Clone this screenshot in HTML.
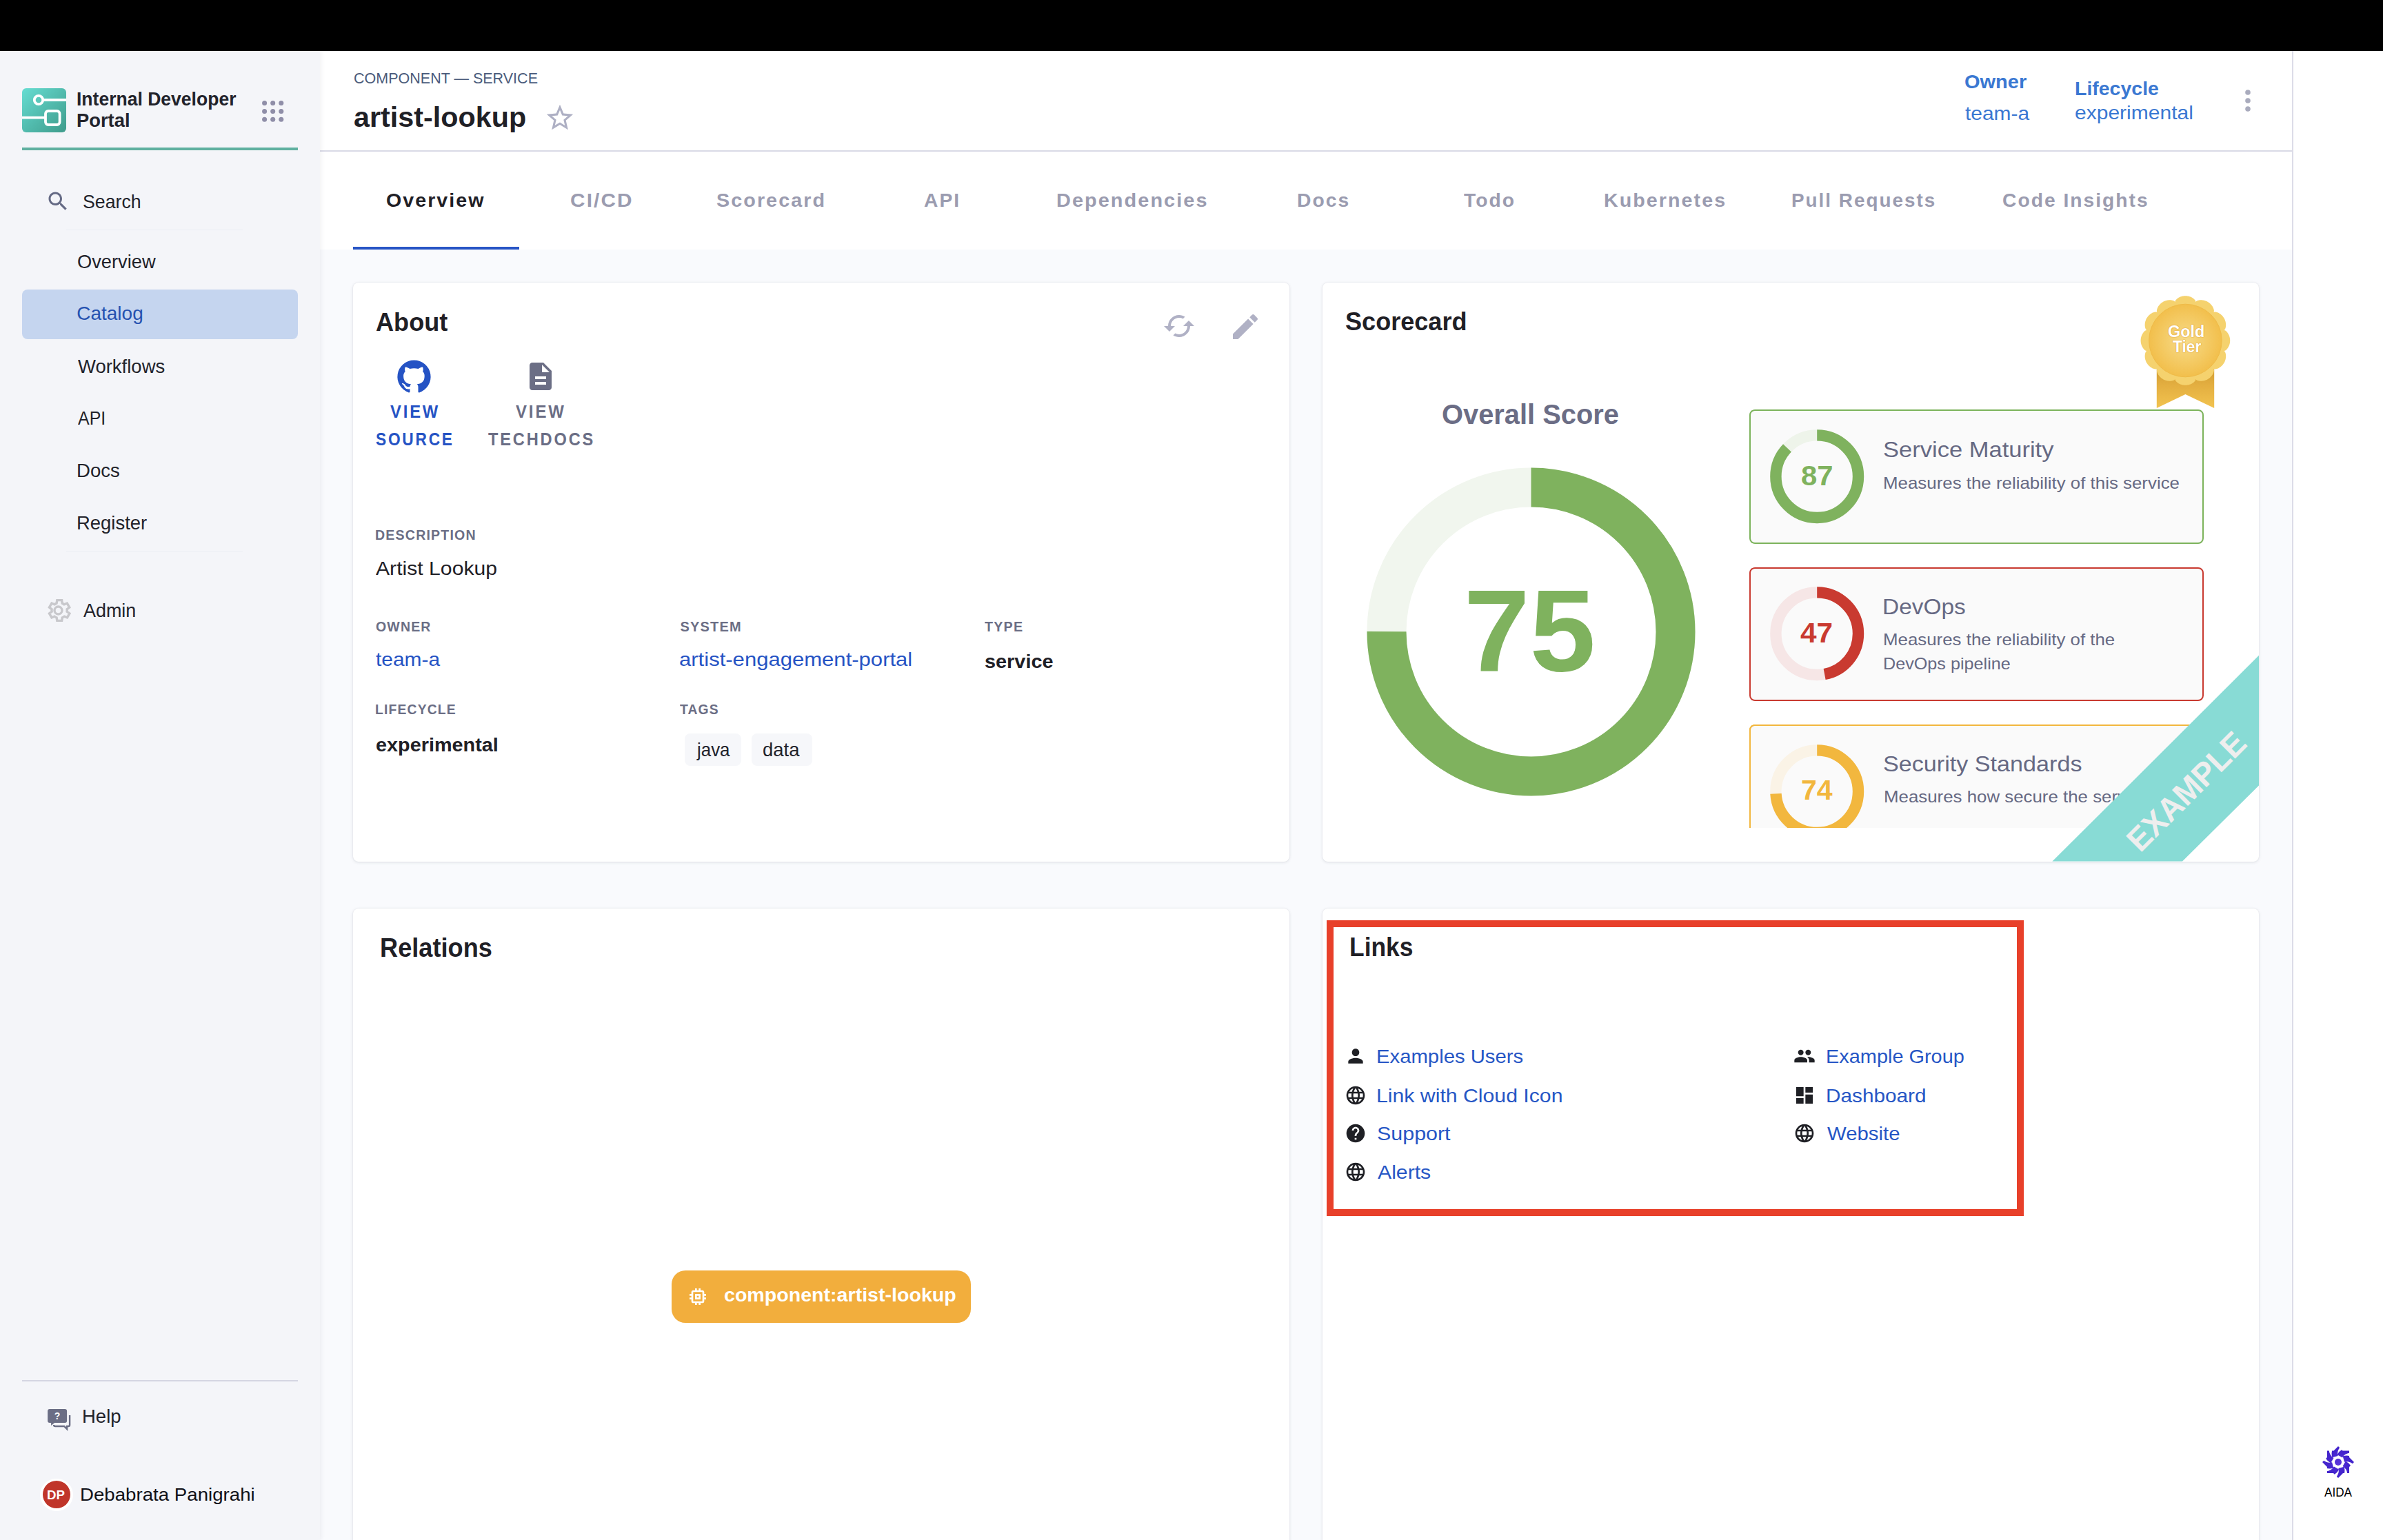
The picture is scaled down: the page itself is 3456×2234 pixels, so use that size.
<!DOCTYPE html>
<html><head><meta charset="utf-8"><title>artist-lookup</title>
<style>
html,body{margin:0;padding:0;width:3456px;height:2234px;overflow:hidden;background:#f9fafd}
#root{position:absolute;left:0;top:0;width:1728px;height:1117px;zoom:2;overflow:hidden;font-family:"Liberation Sans", sans-serif;background:#f9fafd}
.t{position:absolute;white-space:nowrap;transform-origin:0 50%;font-family:"Liberation Sans", sans-serif}
svg{display:block}
</style></head><body><div id="root">
<div style="position:absolute;left:0.00px;top:0.00px;width:1728.00px;height:37.00px;background:#000"></div>
<div style="position:absolute;left:232.00px;top:37.00px;width:1430.00px;height:1080.00px;background:#f9fafd"></div>
<div style="position:absolute;left:1662.00px;top:37.00px;width:66.00px;height:1080.00px;background:#fff;border-left:1px solid #dcdce8;box-sizing:border-box"></div>
<div style="position:absolute;left:232.00px;top:37.00px;width:1430.00px;height:144.00px;background:#fff"></div>
<div style="position:absolute;left:232.00px;top:109.00px;width:1430.00px;height:1.00px;background:#d9dae6"></div>
<div style="position:absolute;left:0.00px;top:37.00px;width:232.00px;height:1080.00px;background:#f4f5f9;box-shadow:1px 0 3px rgba(40,41,61,0.06)"></div>
<svg style="position:absolute;left:16.00px;top:64.00px;width:32.00px;height:32.00px;overflow:visible;" viewBox="0 0 32 32"><defs><linearGradient id="lg" x1="0" y1="0" x2="1" y2="1"><stop offset="0" stop-color="#66ddd2"/><stop offset="1" stop-color="#3e9b8b"/></linearGradient></defs>
<rect x="0" y="0" width="32" height="32" rx="3" fill="url(#lg)"/>
<circle cx="12" cy="8.5" r="3.1" fill="none" stroke="#fff" stroke-width="1.9"/>
<path d="M15.1 8.5H32" stroke="#fff" stroke-width="1.9"/>
<path d="M0 21.3H17" stroke="#fff" stroke-width="1.9"/>
<rect x="17" y="16.5" width="10.3" height="10" rx="2" fill="none" stroke="#fff" stroke-width="1.9"/></svg>
<div class="t" id="t1" style="left:55.53px;top:64.85px;font-size:14.00px;line-height:14.00px;font-weight:700;color:#22232b;letter-spacing:0.00px;transform:scaleX(0.9475);">Internal Developer</div>
<div class="t" id="t2" style="left:55.51px;top:80.65px;font-size:14.00px;line-height:14.00px;font-weight:700;color:#22232b;letter-spacing:0.00px;transform:scaleX(0.9766);">Portal</div>
<svg style="position:absolute;left:190.00px;top:73.00px;width:16.00px;height:16.00px;overflow:visible;" viewBox="0 0 16 16"><g fill="#8f8ea8"><circle cx="1.80" cy="1.80" r="1.75"/><circle cx="7.85" cy="1.80" r="1.75"/><circle cx="13.90" cy="1.80" r="1.75"/><circle cx="1.80" cy="7.70" r="1.75"/><circle cx="7.85" cy="7.70" r="1.75"/><circle cx="13.90" cy="7.70" r="1.75"/><circle cx="1.80" cy="13.60" r="1.75"/><circle cx="7.85" cy="13.60" r="1.75"/><circle cx="13.90" cy="13.60" r="1.75"/></g></svg>
<div style="position:absolute;left:16.00px;top:107.00px;width:200.00px;height:2.00px;background:#5fb0a0"></div>
<svg style="position:absolute;left:33.00px;top:137.00px;width:18.00px;height:18.00px;overflow:visible;" viewBox="0 0 24 24"><path fill="#656a85" d="M15.5 14h-.79l-.28-.27C15.41 12.59 16 11.11 16 9.5 16 5.91 13.09 3 9.5 3S3 5.91 3 9.5 5.91 16 9.5 16c1.61 0 3.09-.59 4.23-1.57l.27.28v.79l5 4.99L20.49 19l-4.99-5zm-6 0C7.01 14 5 11.99 5 9.5S7.01 5 9.5 5 14 7.01 14 9.5 11.99 14 9.5 14z"/></svg>
<div class="t" id="t3" style="left:60.11px;top:139.45px;font-size:14.00px;line-height:14.00px;font-weight:400;color:#22232b;letter-spacing:0.00px;transform:scaleX(0.9540);">Search</div>
<div style="position:absolute;left:48.00px;top:166.50px;width:128.00px;height:0.50px;background:#eceef4"></div>
<div style="position:absolute;left:16.00px;top:210.00px;width:200.00px;height:36.00px;background:#c5d5ef;border-radius:4px"></div>
<div class="t" id="t4" style="left:56.10px;top:182.85px;font-size:14.00px;line-height:14.00px;font-weight:400;color:#22232b;letter-spacing:0.00px;transform:scaleX(0.9744);">Overview</div>
<div class="t" id="t5" style="left:55.60px;top:220.65px;font-size:14.00px;line-height:14.00px;font-weight:400;color:#2652b0;letter-spacing:0.00px;transform:scaleX(1.0000);">Catalog</div>
<div class="t" id="t6" style="left:56.59px;top:259.05px;font-size:14.00px;line-height:14.00px;font-weight:400;color:#22232b;letter-spacing:0.00px;transform:scaleX(0.9814);">Workflows</div>
<div class="t" id="t7" style="left:56.56px;top:296.55px;font-size:14.00px;line-height:14.00px;font-weight:400;color:#22232b;letter-spacing:0.00px;transform:scaleX(0.8909);">API</div>
<div class="t" id="t8" style="left:55.61px;top:334.65px;font-size:14.00px;line-height:14.00px;font-weight:400;color:#22232b;letter-spacing:0.00px;transform:scaleX(0.9839);">Docs</div>
<div class="t" id="t9" style="left:55.61px;top:372.55px;font-size:14.00px;line-height:14.00px;font-weight:400;color:#22232b;letter-spacing:0.00px;transform:scaleX(0.9806);">Register</div>
<div style="position:absolute;left:48.00px;top:400.00px;width:128.00px;height:0.60px;background:#eceef4"></div>
<svg style="position:absolute;left:31.90px;top:432.60px;width:20.50px;height:20.50px;overflow:visible;" viewBox="0 0 24 24"><path fill="none" stroke="#c8c8cc" stroke-width="2" d="M19.4 13a7.6 7.6 0 0 0 0-2l2.1-1.6-2-3.5-2.5 1a7.4 7.4 0 0 0-1.7-1L15 3.3h-4l-.4 2.6a7.4 7.4 0 0 0-1.7 1l-2.5-1-2 3.5L6.5 11a7.6 7.6 0 0 0 0 2l-2.1 1.6 2 3.5 2.5-1c.5.4 1.1.7 1.7 1l.4 2.6h4l.4-2.6c.6-.3 1.2-.6 1.7-1l2.5 1 2-3.5z"/><circle cx="12" cy="12" r="3.2" fill="none" stroke="#c8c8cc" stroke-width="2"/></svg>
<div class="t" id="t10" style="left:60.69px;top:435.75px;font-size:14.00px;line-height:14.00px;font-weight:400;color:#22232b;letter-spacing:0.00px;transform:scaleX(0.9615);">Admin</div>
<div style="position:absolute;left:16.00px;top:1001.00px;width:200.00px;height:1.00px;background:#d5d6e2"></div>
<svg style="position:absolute;left:34.40px;top:1022.00px;width:17.60px;height:16.50px;overflow:visible;" viewBox="0 0 35 33"><path fill="#6b6e85" d="M3 0h22a3 3 0 0 1 3 3v14a3 3 0 0 1-3 3H10l-5 4v-4H3a3 3 0 0 1-3-3V3a3 3 0 0 1 3-3z"/>
<path fill="none" stroke="#6b6e85" stroke-width="2.4" d="M32 9v14a2 2 0 0 1-2 2h-2v4l-4-4H11a2 2 0 0 1-2-2"/>
<text x="14" y="15" font-family="Liberation Sans" font-weight="700" font-size="14" fill="#fff" text-anchor="middle">?</text></svg>
<div class="t" id="t11" style="left:59.71px;top:1020.65px;font-size:14.00px;line-height:14.00px;font-weight:400;color:#22232b;letter-spacing:0.00px;transform:scaleX(0.9818);">Help</div>
<div style="position:absolute;left:29.2px;top:1072.3px;width:23.6px;height:23.6px;border-radius:50%;background:#fff"></div>
<div style="position:absolute;left:31px;top:1074.1px;width:20px;height:20px;border-radius:50%;background:#c0352a"></div>
<div class="t" id="t12" style="left:34.20px;top:1079.26px;font-size:9.50px;line-height:9.50px;font-weight:700;color:#fff;letter-spacing:0.00px;transform:scaleX(0.9846);">DP</div>
<div class="t" id="t13" style="left:57.97px;top:1077.30px;font-size:13.00px;line-height:13.00px;font-weight:400;color:#111118;letter-spacing:0.00px;transform:scaleX(1.0636);">Debabrata Panigrahi</div>
<div class="t" id="t14" style="left:256.40px;top:51.59px;font-size:11.00px;line-height:11.00px;font-weight:400;color:#4a5b7b;letter-spacing:0.00px;transform:scaleX(0.9779);">COMPONENT — SERVICE</div>
<div class="t" id="t15" style="left:256.59px;top:75.07px;font-size:20.00px;line-height:20.00px;font-weight:700;color:#1f2026;letter-spacing:0.00px;transform:scaleX(1.0332);">artist-lookup</div>
<svg style="position:absolute;left:394.50px;top:74.00px;width:23.00px;height:23.00px;overflow:visible;" viewBox="0 0 24 24"><path fill="#aeb0c4" d="M22 9.24l-7.19-.62L12 2 9.19 8.63 2 9.24l5.46 4.73L5.82 21 12 17.27 18.18 21l-1.63-7.03L22 9.24zM12 15.4l-3.76 2.27 1-4.28-3.32-2.88 4.38-.38L12 6.1l1.71 4.04 4.38.38-3.32 2.88 1 4.28L12 15.4z"/></svg>
<div class="t" id="t16" style="left:1424.48px;top:52.65px;font-size:14.00px;line-height:14.00px;font-weight:700;color:#3a78d2;letter-spacing:0.00px;transform:scaleX(1.0349);">Owner</div>
<div class="t" id="t17" style="left:1425.00px;top:75.65px;font-size:14.00px;line-height:14.00px;font-weight:400;color:#3a78d2;letter-spacing:0.00px;transform:scaleX(1.0682);">team-a</div>
<div class="t" id="t18" style="left:1504.49px;top:57.65px;font-size:14.00px;line-height:14.00px;font-weight:700;color:#3a78d2;letter-spacing:0.00px;transform:scaleX(1.0169);">Lifecycle</div>
<div class="t" id="t19" style="left:1504.46px;top:75.15px;font-size:14.00px;line-height:14.00px;font-weight:400;color:#3a78d2;letter-spacing:0.00px;transform:scaleX(1.0722);">experimental</div>
<svg style="position:absolute;left:1618.00px;top:61.00px;width:24.00px;height:24.00px;overflow:visible;" viewBox="0 0 24 24"><g fill="#a9abbd"><circle cx="12" cy="6" r="1.9"/><circle cx="12" cy="12" r="1.9"/><circle cx="12" cy="18" r="1.9"/></g></svg>
<div class="t" id="t20" style="left:280.00px;top:138.55px;font-size:14.00px;line-height:14.00px;font-weight:700;color:#1f2026;letter-spacing:1.00px;transform:scaleX(1.0216);">Overview</div>
<div class="t" id="t21" style="left:413.47px;top:138.55px;font-size:14.00px;line-height:14.00px;font-weight:700;color:#9b9cb0;letter-spacing:1.00px;transform:scaleX(1.0634);">CI/CD</div>
<div class="t" id="t22" style="left:519.49px;top:138.55px;font-size:14.00px;line-height:14.00px;font-weight:700;color:#9b9cb0;letter-spacing:1.00px;transform:scaleX(1.0267);">Scorecard</div>
<div class="t" id="t23" style="left:670.00px;top:138.55px;font-size:14.00px;line-height:14.00px;font-weight:700;color:#9b9cb0;letter-spacing:1.00px;transform:scaleX(1.0082);">API</div>
<div class="t" id="t24" style="left:765.98px;top:138.55px;font-size:14.00px;line-height:14.00px;font-weight:700;color:#9b9cb0;letter-spacing:1.00px;transform:scaleX(1.0314);">Dependencies</div>
<div class="t" id="t25" style="left:940.50px;top:138.55px;font-size:14.00px;line-height:14.00px;font-weight:700;color:#9b9cb0;letter-spacing:1.00px;transform:scaleX(1.0082);">Docs</div>
<div class="t" id="t26" style="left:1061.50px;top:138.55px;font-size:14.00px;line-height:14.00px;font-weight:700;color:#9b9cb0;letter-spacing:1.00px;transform:scaleX(1.0083);">Todo</div>
<div class="t" id="t27" style="left:1162.88px;top:138.55px;font-size:14.00px;line-height:14.00px;font-weight:700;color:#9b9cb0;letter-spacing:1.00px;transform:scaleX(1.0235);">Kubernetes</div>
<div class="t" id="t28" style="left:1299.20px;top:138.55px;font-size:14.00px;line-height:14.00px;font-weight:700;color:#9b9cb0;letter-spacing:1.00px;transform:scaleX(0.9952);">Pull Requests</div>
<div class="t" id="t29" style="left:1452.19px;top:138.55px;font-size:14.00px;line-height:14.00px;font-weight:700;color:#9b9cb0;letter-spacing:1.00px;transform:scaleX(1.0077);">Code Insights</div>
<div style="position:absolute;left:256.00px;top:179.00px;width:120.40px;height:2.00px;background:#2755c5"></div>
<div style="position:absolute;left:256.00px;top:205.00px;width:679.00px;height:420.00px;background:#fff;border-radius:4px;box-shadow:0 0 1px rgba(40,41,61,0.08),0 0.5px 2px rgba(96,97,112,0.16)"></div>
<div style="position:absolute;left:959.00px;top:205.00px;width:679.00px;height:420.00px;background:#fff;border-radius:4px;box-shadow:0 0 1px rgba(40,41,61,0.08),0 0.5px 2px rgba(96,97,112,0.16);overflow:hidden"></div>
<div style="position:absolute;left:256.00px;top:658.80px;width:679.00px;height:481.20px;background:#fff;border-radius:4px;box-shadow:0 0 1px rgba(40,41,61,0.08),0 0.5px 2px rgba(96,97,112,0.16)"></div>
<div style="position:absolute;left:958.80px;top:658.80px;width:679.20px;height:481.20px;background:#fff;border-radius:4px;box-shadow:0 0 1px rgba(40,41,61,0.08),0 0.5px 2px rgba(96,97,112,0.16)"></div>
<div class="t" id="t30" style="left:272.50px;top:224.76px;font-size:18.00px;line-height:18.00px;font-weight:700;color:#1f2026;letter-spacing:0.00px;transform:scaleX(1.0038);">About</div>
<svg style="position:absolute;left:843.10px;top:224.70px;width:24.00px;height:24.00px;overflow:visible;" viewBox="0 0 24 24"><path fill="#b0b1c5" d="M19 8l-4 4h3c0 3.31-2.69 6-6 6-1.01 0-1.97-.25-2.8-.7l-1.46 1.46C8.97 19.54 10.43 20 12 20c4.42 0 8-3.58 8-8h3l-4-4zM6 12c0-3.31 2.69-6 6-6 1.01 0 1.97.25 2.8.7l1.46-1.46C15.03 4.46 13.57 4 12 4c-4.42 0-8 3.58-8 8H1l4 4 4-4H6z"/></svg>
<svg style="position:absolute;left:891.00px;top:225.00px;width:24.00px;height:24.00px;overflow:visible;" viewBox="0 0 24 24"><path fill="#b0b1c5" d="M3 17.25V21h3.75L17.81 9.94l-3.75-3.75L3 17.25zM20.71 7.04c.39-.39.39-1.02 0-1.41l-2.34-2.34c-.39-.39-1.02-.39-1.41 0l-1.83 1.83 3.75 3.75 1.83-1.83z"/></svg>
<svg style="position:absolute;left:288.00px;top:261.00px;width:24.50px;height:24.00px;overflow:visible;" viewBox="0 0 24 24"><path fill="#2553c4" d="M12 .3a12 12 0 0 0-3.8 23.4c.6.1.8-.3.8-.6v-2c-3.3.7-4-1.6-4-1.6-.6-1.4-1.4-1.8-1.4-1.8-1-.7.1-.7.1-.7 1.2 0 1.9 1.2 1.9 1.2 1 1.8 2.8 1.3 3.5 1 0-.8.4-1.3.7-1.6-2.7-.3-5.5-1.3-5.5-6 0-1.2.5-2.3 1.3-3.1-.2-.4-.6-1.6 0-3.2 0 0 1-.3 3.4 1.2a11.5 11.5 0 0 1 6 0c2.3-1.5 3.3-1.2 3.3-1.2.6 1.6.2 2.8 0 3.2.9.8 1.3 1.9 1.3 3.2 0 4.6-2.8 5.6-5.5 5.9.5.4.9 1 .9 2.2v3.3c0 .3.1.7.8.6A12 12 0 0 0 12 .3"/></svg>
<div class="t" id="t31" style="left:283.00px;top:292.72px;font-size:12.50px;line-height:12.50px;font-weight:700;color:#2553c4;letter-spacing:1.50px;transform:scaleX(0.9507);">VIEW</div>
<div class="t" id="t32" style="left:272.50px;top:312.72px;font-size:12.50px;line-height:12.50px;font-weight:700;color:#2553c4;letter-spacing:1.50px;transform:scaleX(0.9098);">SOURCE</div>
<svg style="position:absolute;left:380.00px;top:261.00px;width:24.00px;height:24.00px;overflow:visible;" viewBox="0 0 24 24"><path fill="#6b6e85" d="M14 2H6c-1.1 0-1.99.9-1.99 2L4 20c0 1.1.89 2 1.99 2H18c1.1 0 2-.9 2-2V8l-6-6zm2 16H8v-2h8v2zm0-4H8v-2h8v2zm-3-5V3.5L18.5 9H13z"/></svg>
<div class="t" id="t33" style="left:374.00px;top:292.72px;font-size:12.50px;line-height:12.50px;font-weight:700;color:#6b6e85;letter-spacing:1.50px;transform:scaleX(0.9589);">VIEW</div>
<div class="t" id="t34" style="left:353.88px;top:312.72px;font-size:12.50px;line-height:12.50px;font-weight:700;color:#6b6e85;letter-spacing:1.50px;transform:scaleX(0.9441);">TECHDOCS</div>
<div class="t" id="t35" style="left:272.01px;top:383.24px;font-size:10.00px;line-height:10.00px;font-weight:700;color:#6b6e85;letter-spacing:0.60px;transform:scaleX(0.9796);">DESCRIPTION</div>
<div class="t" id="t36" style="left:272.50px;top:405.35px;font-size:14.00px;line-height:14.00px;font-weight:400;color:#1f2026;letter-spacing:0.00px;transform:scaleX(1.0773);">Artist Lookup</div>
<div class="t" id="t37" style="left:272.50px;top:449.54px;font-size:10.00px;line-height:10.00px;font-weight:700;color:#6b6e85;letter-spacing:0.60px;transform:scaleX(0.9753);">OWNER</div>
<div class="t" id="t38" style="left:493.19px;top:449.54px;font-size:10.00px;line-height:10.00px;font-weight:700;color:#6b6e85;letter-spacing:0.60px;transform:scaleX(1.0000);">SYSTEM</div>
<div class="t" id="t39" style="left:714.00px;top:449.54px;font-size:10.00px;line-height:10.00px;font-weight:700;color:#6b6e85;letter-spacing:0.60px;transform:scaleX(0.9857);">TYPE</div>
<div class="t" id="t40" style="left:272.62px;top:471.65px;font-size:14.00px;line-height:14.00px;font-weight:400;color:#2553c4;letter-spacing:0.00px;transform:scaleX(1.0682);">team-a</div>
<div class="t" id="t41" style="left:492.65px;top:471.65px;font-size:14.00px;line-height:14.00px;font-weight:400;color:#2553c4;letter-spacing:0.00px;transform:scaleX(1.1089);">artist-engagement-portal</div>
<div class="t" id="t42" style="left:714.00px;top:473.15px;font-size:14.00px;line-height:14.00px;font-weight:700;color:#1f2026;letter-spacing:0.00px;transform:scaleX(1.0312);">service</div>
<div class="t" id="t43" style="left:272.02px;top:509.54px;font-size:10.00px;line-height:10.00px;font-weight:700;color:#6b6e85;letter-spacing:0.60px;transform:scaleX(0.9664);">LIFECYCLE</div>
<div class="t" id="t44" style="left:493.19px;top:509.54px;font-size:10.00px;line-height:10.00px;font-weight:700;color:#6b6e85;letter-spacing:0.60px;transform:scaleX(0.9655);">TAGS</div>
<div class="t" id="t45" style="left:272.50px;top:533.45px;font-size:14.00px;line-height:14.00px;font-weight:700;color:#1f2026;letter-spacing:0.00px;transform:scaleX(1.0292);">experimental</div>
<div style="position:absolute;left:496.70px;top:532.00px;width:40.80px;height:23.70px;background:#f6f7fa;border-radius:4px"></div>
<div style="position:absolute;left:545.20px;top:532.00px;width:43.70px;height:23.70px;background:#f6f7fa;border-radius:4px"></div>
<div class="t" id="t46" style="left:505.64px;top:537.15px;font-size:14.00px;line-height:14.00px;font-weight:400;color:#22232b;letter-spacing:0.00px;transform:scaleX(0.9245);">java</div>
<div class="t" id="t47" style="left:553.21px;top:537.15px;font-size:14.00px;line-height:14.00px;font-weight:400;color:#22232b;letter-spacing:0.00px;transform:scaleX(0.9815);">data</div>
<div class="t" id="t48" style="left:975.60px;top:224.26px;font-size:18.00px;line-height:18.00px;font-weight:700;color:#1f2026;letter-spacing:0.00px;transform:scaleX(1.0023);">Scorecard</div>
<div class="t" id="t49" style="left:1045.60px;top:290.27px;font-size:20.00px;line-height:20.00px;font-weight:700;color:#6b6d85;letter-spacing:0.00px;transform:scaleX(0.9961);">Overall Score</div>
<svg style="position:absolute;left:976.95px;top:324.95px;width:266.50px;height:266.50px;overflow:visible;" viewBox="-133.250 -133.250 266.500 266.500"><circle cx="0" cy="0" r="104.750" fill="none" stroke="#f1f6ee" stroke-width="28.500"/><circle cx="0" cy="0" r="104.750" fill="none" stroke="#7fb25e" stroke-width="28.500" stroke-dasharray="493.623 658.164" transform="rotate(-90)"/></svg>
<div class="t" id="t50" style="left:1061.42px;top:415.59px;font-size:84.00px;line-height:84.00px;font-weight:700;color:#7fb25e;letter-spacing:0.00px;transform:scaleX(1.0227);">75</div>
<div style="position:absolute;left:1268.70px;top:297.20px;width:329.30px;height:97.50px;background:#fafafa;border-radius:4px;box-sizing:border-box;border:1px solid #7cb35b"></div>
<div style="position:absolute;left:1268.70px;top:411.30px;width:329.30px;height:97.40px;background:#fafafa;border-radius:4px;box-sizing:border-box;border:1px solid #c93a30"></div>
<div style="position:absolute;left:1268.7px;top:525.3px;width:329.3px;height:75.4px;overflow:hidden"><div style="width:329.3px;height:97.4px;background:#fafafa;border-radius:4px;box-sizing:border-box;border:1px solid #f2b73e"></div></div>
<svg style="position:absolute;left:1279.40px;top:307.70px;width:76.20px;height:76.20px;overflow:visible;" viewBox="-38.100 -38.100 76.200 76.200"><circle cx="0" cy="0" r="29.900" fill="none" stroke="#eef4ea" stroke-width="8.200"/><circle cx="0" cy="0" r="29.900" fill="none" stroke="#7fb25e" stroke-width="8.200" stroke-dasharray="163.444 187.867" transform="rotate(-90)"/></svg>
<svg style="position:absolute;left:1279.40px;top:421.70px;width:76.20px;height:76.20px;overflow:visible;" viewBox="-38.100 -38.100 76.200 76.200"><circle cx="0" cy="0" r="29.900" fill="none" stroke="#f6e6e6" stroke-width="8.200"/><circle cx="0" cy="0" r="29.900" fill="none" stroke="#c93a30" stroke-width="8.200" stroke-dasharray="88.298 187.867" transform="rotate(-90)"/></svg>
<div class="t" id="t51" style="left:1306.09px;top:335.07px;font-size:20.00px;line-height:20.00px;font-weight:700;color:#7fb25e;letter-spacing:0.00px;transform:scaleX(1.0465);">87</div>
<div class="t" id="t52" style="left:1305.61px;top:448.87px;font-size:20.00px;line-height:20.00px;font-weight:700;color:#c93a30;letter-spacing:0.00px;transform:scaleX(1.0591);">47</div>
<div class="t" id="t53" style="left:1365.46px;top:318.16px;font-size:16.00px;line-height:16.00px;font-weight:400;color:#666983;letter-spacing:0.00px;transform:scaleX(1.0786);">Service Maturity</div>
<div class="t" id="t54" style="left:1365.46px;top:344.54px;font-size:12.00px;line-height:12.00px;font-weight:400;color:#666983;letter-spacing:0.00px;transform:scaleX(1.0781);">Measures the reliability of this service</div>
<div class="t" id="t55" style="left:1364.96px;top:431.96px;font-size:16.00px;line-height:16.00px;font-weight:400;color:#666983;letter-spacing:0.00px;transform:scaleX(1.0442);">DevOps</div>
<div class="t" id="t56" style="left:1365.46px;top:458.14px;font-size:12.00px;line-height:12.00px;font-weight:400;color:#666983;letter-spacing:0.00px;transform:scaleX(1.0772);">Measures the reliability of the</div>
<div class="t" id="t57" style="left:1365.48px;top:475.64px;font-size:12.00px;line-height:12.00px;font-weight:400;color:#666983;letter-spacing:0.00px;transform:scaleX(1.0491);">DevOps pipeline</div>
<div style="position:absolute;left:1240px;top:500px;width:398px;height:100.7px;overflow:hidden">
<div style="position:absolute;left:28.7px;top:25.3px;width:329.3px;height:97.4px;background:#fafafa;border-radius:4px;box-sizing:border-box;border:1px solid #f2b73e"></div>
<svg style="position:absolute;left:39.40px;top:35.90px;width:76.2px;height:76.2px" viewBox="-38.1 -38.1 76.2 76.2"><circle r="29.9" fill="none" stroke="#faf3e6" stroke-width="8.2"/><circle r="29.9" fill="none" stroke="#f2b73e" stroke-width="8.2" stroke-dasharray="139.022 187.867" transform="rotate(-90)"/></svg>
</div>
<div class="t" id="t58" style="left:1305.78px;top:563.07px;font-size:20.00px;line-height:20.00px;font-weight:700;color:#f2b73e;letter-spacing:0.00px;transform:scaleX(1.0279);">74</div>
<div class="t" id="t59" style="left:1365.47px;top:545.96px;font-size:16.00px;line-height:16.00px;font-weight:400;color:#666983;letter-spacing:0.00px;transform:scaleX(1.0669);">Security Standards</div>
<div class="t" id="t60" style="left:1366.00px;top:572.24px;font-size:12.00px;line-height:12.00px;font-weight:400;color:#666983;letter-spacing:0.00px;transform:scaleX(1.0770);">Measures how secure the service is</div>
<div style="position:absolute;left:959px;top:205px;width:679px;height:420px;overflow:hidden;border-radius:4px;pointer-events:none">
<svg style="position:absolute;left:0;top:0;width:679px;height:420px" viewBox="959 205 679 420"><polygon fill="#88dbd5" points="1488.2,624.8 1582.5,624.8 1638,569.7 1638,475.4"/></svg>
<div style="position:absolute;left:626.70px;top:369.10px;width:0;height:0"><div id="ex" style="position:absolute;left:0;top:0;transform:translate(-50%,-50%) rotate(-45deg) scaleX(0.968);font-size:23.7px;line-height:23.7px;font-weight:700;color:#eeeeee;white-space:nowrap">EXAMPLE</div></div>
</div>
<svg style="position:absolute;left:1540.00px;top:205.00px;width:90.00px;height:100.00px;overflow:visible;" viewBox="1540 205 90 100"><defs><linearGradient id="rb" x1="0" y1="0" x2="0" y2="1"><stop offset="0" stop-color="#c9962e"/><stop offset="0.5" stop-color="#e3ae40"/><stop offset="1" stop-color="#f2c350"/></linearGradient>
<radialGradient id="gc" cx="0.5" cy="0.5" r="0.5"><stop offset="0" stop-color="#f7dc8a"/><stop offset="1" stop-color="#f2bf4c"/></radialGradient></defs>
<polygon fill="url(#rb)" points="1563.9,262 1605.6,262 1605.6,296 1584.7,286 1563.9,296"/>
<path d="M1584.70 214.60 L1584.98 214.60 L1585.27 214.62 L1585.55 214.64 L1585.83 214.66 L1586.11 214.70 L1586.39 214.75 L1586.67 214.80 L1586.95 214.86 L1587.22 214.93 L1587.50 215.00 L1587.77 215.09 L1588.04 215.18 L1588.31 215.28 L1588.58 215.39 L1588.85 215.51 L1589.11 215.64 L1589.37 215.77 L1589.62 215.92 L1589.88 216.07 L1590.13 216.23 L1590.37 216.40 L1590.61 216.59 L1590.85 216.78 L1591.08 216.99 L1591.30 217.21 L1591.52 217.45 L1591.73 217.72 L1591.93 218.01 L1592.11 218.36 L1592.21 218.99 L1592.60 218.50 L1592.94 218.28 L1593.25 218.12 L1593.57 218.00 L1593.87 217.90 L1594.18 217.82 L1594.48 217.76 L1594.79 217.71 L1595.09 217.67 L1595.39 217.64 L1595.68 217.62 L1595.98 217.62 L1596.27 217.62 L1596.56 217.63 L1596.85 217.66 L1597.14 217.69 L1597.43 217.72 L1597.71 217.77 L1597.99 217.83 L1598.27 217.89 L1598.55 217.96 L1598.82 218.04 L1599.10 218.13 L1599.36 218.22 L1599.63 218.32 L1599.89 218.43 L1600.15 218.55 L1600.40 218.67 L1600.65 218.80 L1600.90 218.94 L1601.14 219.09 L1601.38 219.24 L1601.62 219.40 L1601.85 219.56 L1602.07 219.73 L1602.29 219.91 L1602.51 220.10 L1602.72 220.29 L1602.92 220.49 L1603.12 220.69 L1603.32 220.90 L1603.51 221.12 L1603.69 221.34 L1603.86 221.57 L1604.04 221.80 L1604.20 222.04 L1604.36 222.29 L1604.51 222.54 L1604.65 222.80 L1604.78 223.07 L1604.91 223.34 L1605.03 223.62 L1605.13 223.90 L1605.23 224.20 L1605.31 224.50 L1605.38 224.82 L1605.43 225.15 L1605.45 225.51 L1605.43 225.90 L1605.21 226.49 L1605.80 226.27 L1606.19 226.25 L1606.55 226.27 L1606.88 226.32 L1607.20 226.39 L1607.50 226.47 L1607.80 226.57 L1608.08 226.67 L1608.36 226.79 L1608.63 226.92 L1608.90 227.05 L1609.16 227.19 L1609.41 227.34 L1609.66 227.50 L1609.90 227.66 L1610.13 227.84 L1610.36 228.01 L1610.58 228.19 L1610.80 228.38 L1611.01 228.58 L1611.21 228.78 L1611.41 228.98 L1611.60 229.19 L1611.79 229.41 L1611.97 229.63 L1612.14 229.85 L1612.30 230.08 L1612.46 230.32 L1612.61 230.56 L1612.76 230.80 L1612.90 231.05 L1613.03 231.30 L1613.15 231.55 L1613.27 231.81 L1613.38 232.07 L1613.48 232.34 L1613.57 232.60 L1613.66 232.88 L1613.74 233.15 L1613.81 233.43 L1613.87 233.71 L1613.93 233.99 L1613.98 234.27 L1614.01 234.56 L1614.04 234.85 L1614.07 235.14 L1614.08 235.43 L1614.08 235.72 L1614.08 236.02 L1614.06 236.31 L1614.03 236.61 L1613.99 236.91 L1613.94 237.22 L1613.88 237.52 L1613.80 237.83 L1613.70 238.13 L1613.58 238.45 L1613.42 238.76 L1613.20 239.10 L1612.71 239.49 L1613.34 239.59 L1613.69 239.77 L1613.98 239.97 L1614.25 240.18 L1614.49 240.40 L1614.71 240.62 L1614.92 240.85 L1615.11 241.09 L1615.30 241.33 L1615.47 241.57 L1615.63 241.82 L1615.78 242.08 L1615.93 242.33 L1616.06 242.59 L1616.19 242.85 L1616.31 243.12 L1616.42 243.39 L1616.52 243.66 L1616.61 243.93 L1616.70 244.20 L1616.77 244.48 L1616.84 244.75 L1616.90 245.03 L1616.95 245.31 L1617.00 245.59 L1617.04 245.87 L1617.06 246.15 L1617.08 246.43 L1617.10 246.72 L1617.10 247.00 L1617.10 247.28 L1617.08 247.57 L1617.06 247.85 L1617.04 248.13 L1617.00 248.41 L1616.95 248.69 L1616.90 248.97 L1616.84 249.25 L1616.77 249.52 L1616.70 249.80 L1616.61 250.07 L1616.52 250.34 L1616.42 250.61 L1616.31 250.88 L1616.19 251.15 L1616.06 251.41 L1615.93 251.67 L1615.78 251.92 L1615.63 252.18 L1615.47 252.43 L1615.30 252.67 L1615.11 252.91 L1614.92 253.15 L1614.71 253.38 L1614.49 253.60 L1614.25 253.82 L1613.98 254.03 L1613.69 254.23 L1613.34 254.41 L1612.71 254.51 L1613.20 254.90 L1613.42 255.24 L1613.58 255.55 L1613.70 255.87 L1613.80 256.17 L1613.88 256.48 L1613.94 256.78 L1613.99 257.09 L1614.03 257.39 L1614.06 257.69 L1614.08 257.98 L1614.08 258.28 L1614.08 258.57 L1614.07 258.86 L1614.04 259.15 L1614.01 259.44 L1613.98 259.73 L1613.93 260.01 L1613.87 260.29 L1613.81 260.57 L1613.74 260.85 L1613.66 261.12 L1613.57 261.40 L1613.48 261.66 L1613.38 261.93 L1613.27 262.19 L1613.15 262.45 L1613.03 262.70 L1612.90 262.95 L1612.76 263.20 L1612.61 263.44 L1612.46 263.68 L1612.30 263.92 L1612.14 264.15 L1611.97 264.37 L1611.79 264.59 L1611.60 264.81 L1611.41 265.02 L1611.21 265.22 L1611.01 265.42 L1610.80 265.62 L1610.58 265.81 L1610.36 265.99 L1610.13 266.16 L1609.90 266.34 L1609.66 266.50 L1609.41 266.66 L1609.16 266.81 L1608.90 266.95 L1608.63 267.08 L1608.36 267.21 L1608.08 267.33 L1607.80 267.43 L1607.50 267.53 L1607.20 267.61 L1606.88 267.68 L1606.55 267.73 L1606.19 267.75 L1605.80 267.73 L1605.21 267.51 L1605.43 268.10 L1605.45 268.49 L1605.43 268.85 L1605.38 269.18 L1605.31 269.50 L1605.23 269.80 L1605.13 270.10 L1605.03 270.38 L1604.91 270.66 L1604.78 270.93 L1604.65 271.20 L1604.51 271.46 L1604.36 271.71 L1604.20 271.96 L1604.04 272.20 L1603.86 272.43 L1603.69 272.66 L1603.51 272.88 L1603.32 273.10 L1603.12 273.31 L1602.92 273.51 L1602.72 273.71 L1602.51 273.90 L1602.29 274.09 L1602.07 274.27 L1601.85 274.44 L1601.62 274.60 L1601.38 274.76 L1601.14 274.91 L1600.90 275.06 L1600.65 275.20 L1600.40 275.33 L1600.15 275.45 L1599.89 275.57 L1599.63 275.68 L1599.36 275.78 L1599.10 275.87 L1598.82 275.96 L1598.55 276.04 L1598.27 276.11 L1597.99 276.17 L1597.71 276.23 L1597.43 276.28 L1597.14 276.31 L1596.85 276.34 L1596.56 276.37 L1596.27 276.38 L1595.98 276.38 L1595.68 276.38 L1595.39 276.36 L1595.09 276.33 L1594.79 276.29 L1594.48 276.24 L1594.18 276.18 L1593.87 276.10 L1593.57 276.00 L1593.25 275.88 L1592.94 275.72 L1592.60 275.50 L1592.21 275.01 L1592.11 275.64 L1591.93 275.99 L1591.73 276.28 L1591.52 276.55 L1591.30 276.79 L1591.08 277.01 L1590.85 277.22 L1590.61 277.41 L1590.37 277.60 L1590.13 277.77 L1589.88 277.93 L1589.62 278.08 L1589.37 278.23 L1589.11 278.36 L1588.85 278.49 L1588.58 278.61 L1588.31 278.72 L1588.04 278.82 L1587.77 278.91 L1587.50 279.00 L1587.22 279.07 L1586.95 279.14 L1586.67 279.20 L1586.39 279.25 L1586.11 279.30 L1585.83 279.34 L1585.55 279.36 L1585.27 279.38 L1584.98 279.40 L1584.70 279.40 L1584.42 279.40 L1584.13 279.38 L1583.85 279.36 L1583.57 279.34 L1583.29 279.30 L1583.01 279.25 L1582.73 279.20 L1582.45 279.14 L1582.18 279.07 L1581.90 279.00 L1581.63 278.91 L1581.36 278.82 L1581.09 278.72 L1580.82 278.61 L1580.55 278.49 L1580.29 278.36 L1580.03 278.23 L1579.78 278.08 L1579.52 277.93 L1579.27 277.77 L1579.03 277.60 L1578.79 277.41 L1578.55 277.22 L1578.32 277.01 L1578.10 276.79 L1577.88 276.55 L1577.67 276.28 L1577.47 275.99 L1577.29 275.64 L1577.19 275.01 L1576.80 275.50 L1576.46 275.72 L1576.15 275.88 L1575.83 276.00 L1575.53 276.10 L1575.22 276.18 L1574.92 276.24 L1574.61 276.29 L1574.31 276.33 L1574.01 276.36 L1573.72 276.38 L1573.42 276.38 L1573.13 276.38 L1572.84 276.37 L1572.55 276.34 L1572.26 276.31 L1571.97 276.28 L1571.69 276.23 L1571.41 276.17 L1571.13 276.11 L1570.85 276.04 L1570.58 275.96 L1570.30 275.87 L1570.04 275.78 L1569.77 275.68 L1569.51 275.57 L1569.25 275.45 L1569.00 275.33 L1568.75 275.20 L1568.50 275.06 L1568.26 274.91 L1568.02 274.76 L1567.78 274.60 L1567.55 274.44 L1567.33 274.27 L1567.11 274.09 L1566.89 273.90 L1566.68 273.71 L1566.48 273.51 L1566.28 273.31 L1566.08 273.10 L1565.89 272.88 L1565.71 272.66 L1565.54 272.43 L1565.36 272.20 L1565.20 271.96 L1565.04 271.71 L1564.89 271.46 L1564.75 271.20 L1564.62 270.93 L1564.49 270.66 L1564.37 270.38 L1564.27 270.10 L1564.17 269.80 L1564.09 269.50 L1564.02 269.18 L1563.97 268.85 L1563.95 268.49 L1563.97 268.10 L1564.19 267.51 L1563.60 267.73 L1563.21 267.75 L1562.85 267.73 L1562.52 267.68 L1562.20 267.61 L1561.90 267.53 L1561.60 267.43 L1561.32 267.33 L1561.04 267.21 L1560.77 267.08 L1560.50 266.95 L1560.24 266.81 L1559.99 266.66 L1559.74 266.50 L1559.50 266.34 L1559.27 266.16 L1559.04 265.99 L1558.82 265.81 L1558.60 265.62 L1558.39 265.42 L1558.19 265.22 L1557.99 265.02 L1557.80 264.81 L1557.61 264.59 L1557.43 264.37 L1557.26 264.15 L1557.10 263.92 L1556.94 263.68 L1556.79 263.44 L1556.64 263.20 L1556.50 262.95 L1556.37 262.70 L1556.25 262.45 L1556.13 262.19 L1556.02 261.93 L1555.92 261.66 L1555.83 261.40 L1555.74 261.12 L1555.66 260.85 L1555.59 260.57 L1555.53 260.29 L1555.47 260.01 L1555.42 259.73 L1555.39 259.44 L1555.36 259.15 L1555.33 258.86 L1555.32 258.57 L1555.32 258.28 L1555.32 257.98 L1555.34 257.69 L1555.37 257.39 L1555.41 257.09 L1555.46 256.78 L1555.52 256.48 L1555.60 256.17 L1555.70 255.87 L1555.82 255.55 L1555.98 255.24 L1556.20 254.90 L1556.69 254.51 L1556.06 254.41 L1555.71 254.23 L1555.42 254.03 L1555.15 253.82 L1554.91 253.60 L1554.69 253.38 L1554.48 253.15 L1554.29 252.91 L1554.10 252.67 L1553.93 252.43 L1553.77 252.18 L1553.62 251.92 L1553.47 251.67 L1553.34 251.41 L1553.21 251.15 L1553.09 250.88 L1552.98 250.61 L1552.88 250.34 L1552.79 250.07 L1552.70 249.80 L1552.63 249.52 L1552.56 249.25 L1552.50 248.97 L1552.45 248.69 L1552.40 248.41 L1552.36 248.13 L1552.34 247.85 L1552.32 247.57 L1552.30 247.28 L1552.30 247.00 L1552.30 246.72 L1552.32 246.43 L1552.34 246.15 L1552.36 245.87 L1552.40 245.59 L1552.45 245.31 L1552.50 245.03 L1552.56 244.75 L1552.63 244.48 L1552.70 244.20 L1552.79 243.93 L1552.88 243.66 L1552.98 243.39 L1553.09 243.12 L1553.21 242.85 L1553.34 242.59 L1553.47 242.33 L1553.62 242.08 L1553.77 241.82 L1553.93 241.57 L1554.10 241.33 L1554.29 241.09 L1554.48 240.85 L1554.69 240.62 L1554.91 240.40 L1555.15 240.18 L1555.42 239.97 L1555.71 239.77 L1556.06 239.59 L1556.69 239.49 L1556.20 239.10 L1555.98 238.76 L1555.82 238.45 L1555.70 238.13 L1555.60 237.83 L1555.52 237.52 L1555.46 237.22 L1555.41 236.91 L1555.37 236.61 L1555.34 236.31 L1555.32 236.02 L1555.32 235.72 L1555.32 235.43 L1555.33 235.14 L1555.36 234.85 L1555.39 234.56 L1555.42 234.27 L1555.47 233.99 L1555.53 233.71 L1555.59 233.43 L1555.66 233.15 L1555.74 232.88 L1555.83 232.60 L1555.92 232.34 L1556.02 232.07 L1556.13 231.81 L1556.25 231.55 L1556.37 231.30 L1556.50 231.05 L1556.64 230.80 L1556.79 230.56 L1556.94 230.32 L1557.10 230.08 L1557.26 229.85 L1557.43 229.63 L1557.61 229.41 L1557.80 229.19 L1557.99 228.98 L1558.19 228.78 L1558.39 228.58 L1558.60 228.38 L1558.82 228.19 L1559.04 228.01 L1559.27 227.84 L1559.50 227.66 L1559.74 227.50 L1559.99 227.34 L1560.24 227.19 L1560.50 227.05 L1560.77 226.92 L1561.04 226.79 L1561.32 226.67 L1561.60 226.57 L1561.90 226.47 L1562.20 226.39 L1562.52 226.32 L1562.85 226.27 L1563.21 226.25 L1563.60 226.27 L1564.19 226.49 L1563.97 225.90 L1563.95 225.51 L1563.97 225.15 L1564.02 224.82 L1564.09 224.50 L1564.17 224.20 L1564.27 223.90 L1564.37 223.62 L1564.49 223.34 L1564.62 223.07 L1564.75 222.80 L1564.89 222.54 L1565.04 222.29 L1565.20 222.04 L1565.36 221.80 L1565.54 221.57 L1565.71 221.34 L1565.89 221.12 L1566.08 220.90 L1566.28 220.69 L1566.48 220.49 L1566.68 220.29 L1566.89 220.10 L1567.11 219.91 L1567.33 219.73 L1567.55 219.56 L1567.78 219.40 L1568.02 219.24 L1568.26 219.09 L1568.50 218.94 L1568.75 218.80 L1569.00 218.67 L1569.25 218.55 L1569.51 218.43 L1569.77 218.32 L1570.04 218.22 L1570.30 218.13 L1570.58 218.04 L1570.85 217.96 L1571.13 217.89 L1571.41 217.83 L1571.69 217.77 L1571.97 217.72 L1572.26 217.69 L1572.55 217.66 L1572.84 217.63 L1573.13 217.62 L1573.42 217.62 L1573.72 217.62 L1574.01 217.64 L1574.31 217.67 L1574.61 217.71 L1574.92 217.76 L1575.22 217.82 L1575.53 217.90 L1575.83 218.00 L1576.15 218.12 L1576.46 218.28 L1576.80 218.50 L1577.19 218.99 L1577.29 218.36 L1577.47 218.01 L1577.67 217.72 L1577.88 217.45 L1578.10 217.21 L1578.32 216.99 L1578.55 216.78 L1578.79 216.59 L1579.03 216.40 L1579.27 216.23 L1579.52 216.07 L1579.78 215.92 L1580.03 215.77 L1580.29 215.64 L1580.55 215.51 L1580.82 215.39 L1581.09 215.28 L1581.36 215.18 L1581.63 215.09 L1581.90 215.00 L1582.18 214.93 L1582.45 214.86 L1582.73 214.80 L1583.01 214.75 L1583.29 214.70 L1583.57 214.66 L1583.85 214.64 L1584.13 214.62 L1584.42 214.60 L1584.70 214.60 Z" fill="#f5d26e"/>
<circle cx="1584.7" cy="247" r="26.4" fill="url(#gc)" stroke="#efbb48" stroke-width="0.5"/></svg>
<div class="t" id="t61" style="left:1571.89px;top:235.17px;font-size:11.50px;line-height:11.50px;font-weight:700;color:#fff;letter-spacing:0.00px;transform:scaleX(1.0200);text-shadow:0 0 0.6px #d9962a,0 0 0.6px #d9962a;">Gold</div>
<div class="t" id="t62" style="left:1575.50px;top:246.07px;font-size:11.50px;line-height:11.50px;font-weight:700;color:#fff;letter-spacing:0.00px;transform:scaleX(0.9902);text-shadow:0 0 0.6px #d9962a,0 0 0.6px #d9962a;">Tier</div>
<div class="t" id="t63" style="left:275.43px;top:677.82px;font-size:19.00px;line-height:19.00px;font-weight:700;color:#1f2026;letter-spacing:0.00px;transform:scaleX(0.9524);">Relations</div>
<div style="position:absolute;left:487.00px;top:921.60px;width:216.80px;height:37.70px;background:#f2ae3d;border-radius:10px"></div>
<svg style="position:absolute;left:498.00px;top:932.50px;width:16.00px;height:16.00px;overflow:visible;" viewBox="0 0 24 24"><path fill="#fff" d="M15 9H9v6h6V9zm-2 4h-2v-2h2v2zm8-2V9h-2V7c0-1.1-.9-2-2-2h-2V3h-2v2h-2V3H9v2H7c-1.1 0-2 .9-2 2v2H3v2h2v2H3v2h2v2c0 1.1.9 2 2 2h2v2h2v-2h2v2h2v-2h2c1.1 0 2-.9 2-2v-2h2v-2h-2v-2h2zm-4 6H7V7h10v10z"/></svg>
<div class="t" id="t64" style="left:525.00px;top:932.65px;font-size:14.00px;line-height:14.00px;font-weight:700;color:#fff;letter-spacing:0.00px;transform:scaleX(1.0213);">component:artist-lookup</div>
<div style="position:absolute;left:961.90px;top:667.60px;width:505.40px;height:214.40px;border:5px solid #e8402a;box-sizing:border-box"></div>
<div class="t" id="t65" style="left:978.64px;top:677.52px;font-size:19.00px;line-height:19.00px;font-weight:700;color:#1f2026;letter-spacing:0.00px;transform:scaleX(0.9320);">Links</div>
<svg style="position:absolute;left:975.00px;top:758.20px;width:16.00px;height:16.00px;overflow:visible;" viewBox="0 0 24 24"><path fill="#1f2025" d="M12 12c2.21 0 4-1.79 4-4s-1.79-4-4-4-4 1.79-4 4 1.79 4 4 4zm0 2c-2.67 0-8 1.34-8 4v2h16v-2c0-2.66-5.33-4-8-4z"/></svg>
<div class="t" id="t66" style="left:997.95px;top:759.35px;font-size:14.00px;line-height:14.00px;font-weight:400;color:#2656c5;letter-spacing:0.00px;transform:scaleX(1.0458);">Examples Users</div>
<svg style="position:absolute;left:975.00px;top:786.30px;width:16.00px;height:16.00px;overflow:visible;" viewBox="0 0 24 24"><path fill="#1f2025" d="M11.99 2C6.47 2 2 6.48 2 12s4.47 10 9.99 10C17.52 22 22 17.52 22 12S17.52 2 11.99 2zm6.93 6h-2.95c-.32-1.25-.78-2.45-1.38-3.56 1.84.63 3.37 1.91 4.33 3.56zM12 4.04c.83 1.2 1.48 2.53 1.91 3.96h-3.82c.43-1.43 1.08-2.76 1.91-3.96zM4.26 14C4.1 13.36 4 12.69 4 12s.1-1.36.26-2h3.38c-.08.66-.14 1.32-.14 2 0 .68.06 1.34.14 2H4.26zm.82 2h2.95c.32 1.25.78 2.45 1.38 3.560-1.84-.63-3.37-1.9-4.33-3.56zm2.95-8H5.08c.96-1.66 2.49-2.93 4.33-3.56C8.81 5.55 8.35 6.75 8.03 8zM12 19.96c-.83-1.2-1.48-2.53-1.91-3.96h3.82c-.43 1.43-1.08 2.76-1.91 3.96zM14.34 14H9.66c-.09-.66-.16-1.32-.16-2 0-.68.07-1.35.16-2h4.68c.09.65.16 1.32.16 2 0 .68-.07 1.34-.16 2zm.25 5.56c.6-1.11 1.06-2.31 1.38-3.56h2.95c-.96 1.65-2.49 2.93-4.33 3.56zM16.36 14c.08-.66.14-1.32.14-2 0-.68-.06-1.34-.14-2h3.38c.16.64.26 1.31.26 2s-.1 1.36-.26 2h-3.38z"/></svg>
<div class="t" id="t67" style="left:997.92px;top:787.95px;font-size:14.00px;line-height:14.00px;font-weight:400;color:#2656c5;letter-spacing:0.00px;transform:scaleX(1.0794);">Link with Cloud Icon</div>
<svg style="position:absolute;left:975.00px;top:813.80px;width:16.00px;height:16.00px;overflow:visible;" viewBox="0 0 24 24"><path fill="#1f2025" d="M12 2C6.48 2 2 6.48 2 12s4.48 10 10 10 10-4.48 10-10S17.52 2 12 2zm1 17h-2v-2h2v2zm2.07-7.75l-.9.92C13.45 12.9 13 13.5 13 15h-2v-.5c0-1.1.45-2.1 1.17-2.83l1.24-1.26c.37-.36.59-.86.59-1.41 0-1.1-.9-2-2-2s-2 .9-2 2H8c0-2.21 1.79-4 4-4s4 1.79 4 4c0 .88-.36 1.68-.93 2.25z"/></svg>
<div class="t" id="t68" style="left:998.46px;top:815.55px;font-size:14.00px;line-height:14.00px;font-weight:400;color:#2656c5;letter-spacing:0.00px;transform:scaleX(1.0866);">Support</div>
<svg style="position:absolute;left:975.00px;top:842.00px;width:16.00px;height:16.00px;overflow:visible;" viewBox="0 0 24 24"><path fill="#1f2025" d="M11.99 2C6.47 2 2 6.48 2 12s4.47 10 9.99 10C17.52 22 22 17.52 22 12S17.52 2 11.99 2zm6.93 6h-2.95c-.32-1.25-.78-2.45-1.38-3.56 1.84.63 3.37 1.91 4.33 3.56zM12 4.04c.83 1.2 1.48 2.53 1.91 3.96h-3.82c.43-1.43 1.08-2.76 1.91-3.96zM4.26 14C4.1 13.36 4 12.69 4 12s.1-1.36.26-2h3.38c-.08.66-.14 1.32-.14 2 0 .68.06 1.34.14 2H4.26zm.82 2h2.95c.32 1.25.78 2.45 1.38 3.560-1.84-.63-3.37-1.9-4.33-3.56zm2.95-8H5.08c.96-1.66 2.49-2.93 4.33-3.56C8.81 5.55 8.35 6.75 8.03 8zM12 19.96c-.83-1.2-1.48-2.53-1.91-3.96h3.82c-.43 1.43-1.08 2.76-1.91 3.96zM14.34 14H9.66c-.09-.66-.16-1.32-.16-2 0-.68.07-1.35.16-2h4.68c.09.65.16 1.32.16 2 0 .68-.07 1.34-.16 2zm.25 5.56c.6-1.11 1.06-2.31 1.38-3.56h2.95c-.96 1.65-2.49 2.93-4.33 3.56zM16.36 14c.08-.66.14-1.32.14-2 0-.68-.06-1.34-.14-2h3.38c.16.64.26 1.31.26 2s-.1 1.36-.26 2h-3.38z"/></svg>
<div class="t" id="t69" style="left:999.00px;top:843.55px;font-size:14.00px;line-height:14.00px;font-weight:400;color:#2656c5;letter-spacing:0.00px;transform:scaleX(1.0789);">Alerts</div>
<svg style="position:absolute;left:1300.50px;top:758.20px;width:16.00px;height:16.00px;overflow:visible;" viewBox="0 0 24 24"><path fill="#1f2025" d="M16 11c1.66 0 2.99-1.34 2.99-3S17.66 5 16 5c-1.66 0-3 1.34-3 3s1.34 3 3 3zm-8 0c1.66 0 2.99-1.34 2.99-3S9.66 5 8 5C6.34 5 5 6.34 5 8s1.34 3 3 3zm0 2c-2.33 0-7 1.17-7 3.5V19h14v-2.5c0-2.33-4.67-3.5-7-3.5zm8 0c-.29 0-.62.02-.97.05 1.16.84 1.97 1.97 1.97 3.45V19h6v-2.5c0-2.33-4.67-3.5-7-3.5z"/></svg>
<div class="t" id="t70" style="left:1323.97px;top:759.35px;font-size:14.00px;line-height:14.00px;font-weight:400;color:#2656c5;letter-spacing:0.00px;transform:scaleX(1.0323);">Example Group</div>
<svg style="position:absolute;left:1300.50px;top:786.30px;width:16.00px;height:16.00px;overflow:visible;" viewBox="0 0 24 24"><path fill="#1f2025" d="M3 13h8V3H3v10zm0 8h8v-6H3v6zm10 0h8V11h-8v10zm0-18v6h8V3h-8z"/></svg>
<div class="t" id="t71" style="left:1323.94px;top:787.95px;font-size:14.00px;line-height:14.00px;font-weight:400;color:#2656c5;letter-spacing:0.00px;transform:scaleX(1.0627);">Dashboard</div>
<svg style="position:absolute;left:1300.50px;top:813.80px;width:16.00px;height:16.00px;overflow:visible;" viewBox="0 0 24 24"><path fill="#1f2025" d="M11.99 2C6.47 2 2 6.48 2 12s4.47 10 9.99 10C17.52 22 22 17.52 22 12S17.52 2 11.99 2zm6.93 6h-2.95c-.32-1.25-.78-2.45-1.38-3.56 1.84.63 3.37 1.91 4.33 3.56zM12 4.04c.83 1.2 1.48 2.53 1.91 3.96h-3.82c.43-1.43 1.08-2.76 1.91-3.96zM4.26 14C4.1 13.36 4 12.69 4 12s.1-1.36.26-2h3.38c-.08.66-.14 1.32-.14 2 0 .68.06 1.34.14 2H4.26zm.82 2h2.95c.32 1.25.78 2.45 1.38 3.560-1.84-.63-3.37-1.9-4.33-3.56zm2.95-8H5.08c.96-1.66 2.49-2.93 4.33-3.56C8.81 5.55 8.35 6.75 8.03 8zM12 19.96c-.83-1.2-1.48-2.53-1.91-3.96h3.82c-.43 1.43-1.08 2.76-1.91 3.96zM14.34 14H9.66c-.09-.66-.16-1.32-.16-2 0-.68.07-1.35.16-2h4.68c.09.65.16 1.32.16 2 0 .68-.07 1.34-.16 2zm.25 5.56c.6-1.11 1.06-2.31 1.38-3.56h2.95c-.96 1.65-2.49 2.93-4.33 3.56zM16.36 14c.08-.66.14-1.32.14-2 0-.68-.06-1.34-.14-2h3.38c.16.64.26 1.31.26 2s-.1 1.36-.26 2h-3.38z"/></svg>
<div class="t" id="t72" style="left:1325.00px;top:815.55px;font-size:14.00px;line-height:14.00px;font-weight:400;color:#2656c5;letter-spacing:0.00px;transform:scaleX(1.0480);">Website</div>
<svg style="position:absolute;left:1684.00px;top:1049.00px;width:23.00px;height:23.00px;overflow:visible;" viewBox="-230 -230 460 460"><defs><linearGradient id="ag" gradientUnits="userSpaceOnUse" x1="-200" y1="-230" x2="150" y2="230"><stop offset="0" stop-color="#3016c0"/><stop offset="1" stop-color="#7a4cf0"/></linearGradient><clipPath id="un"><polygon points="0,-230 230,0 0,230 -230,0"/><rect x="-160" y="-165" width="320" height="325"/></clipPath></defs><g clip-path="url(#un)"><path transform="rotate(0)" d="M-45 -78 Q-70 -170 0 -250" fill="none" stroke="url(#ag)" stroke-width="86"/><path transform="rotate(45)" d="M-45 -78 Q-70 -170 0 -250" fill="none" stroke="url(#ag)" stroke-width="86"/><path transform="rotate(90)" d="M-45 -78 Q-70 -170 0 -250" fill="none" stroke="url(#ag)" stroke-width="86"/><path transform="rotate(135)" d="M-45 -78 Q-70 -170 0 -250" fill="none" stroke="url(#ag)" stroke-width="86"/><path transform="rotate(180)" d="M-45 -78 Q-70 -170 0 -250" fill="none" stroke="url(#ag)" stroke-width="86"/><path transform="rotate(225)" d="M-45 -78 Q-70 -170 0 -250" fill="none" stroke="url(#ag)" stroke-width="86"/><path transform="rotate(270)" d="M-45 -78 Q-70 -170 0 -250" fill="none" stroke="url(#ag)" stroke-width="86"/><path transform="rotate(315)" d="M-45 -78 Q-70 -170 0 -250" fill="none" stroke="url(#ag)" stroke-width="86"/></g><circle r="50" fill="url(#ag)"/></svg>
<div class="t" id="t73" style="left:1685.50px;top:1077.88px;font-size:9.00px;line-height:9.00px;font-weight:400;color:#000;letter-spacing:0.00px;transform:scaleX(0.9524);">AIDA</div>
</div></body></html>
